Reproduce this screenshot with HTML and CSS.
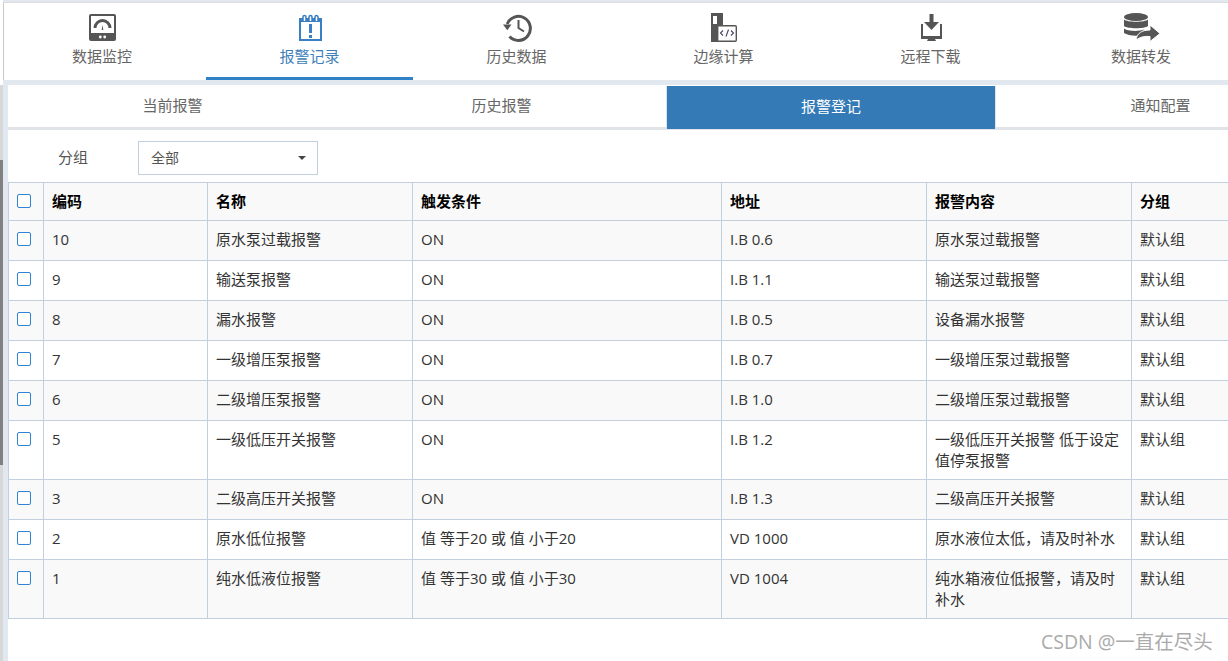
FILE: index.html
```html
<!DOCTYPE html>
<html lang="zh-CN">
<head>
<meta charset="utf-8">
<title>报警登记</title>
<link rel="stylesheet" href="styles.css">
</head>
<body>
<div class="page">
  <div class="rail"><div class="rail-top"></div><div class="rail-light"></div><div class="rail-thumb"></div><div class="rail-end"></div></div>
  <div class="main">
    <nav class="nav">
      <a class="nav-item nav-first">
        <svg class="icon" viewBox="0 0 40 30"><rect x="7" y="1" width="27" height="27" rx="2" fill="#555"/><rect x="9" y="3" width="23" height="17" fill="#fff"/><path d="M13 15a7.500 7.500 0 0 1 15 0" fill="none" stroke="#555" stroke-width="3"/><path d="M20.500 12l.8 5h-1.600z" fill="#555"/><circle cx="18.300" cy="24" r="1.400" fill="#fff"/><circle cx="22.700" cy="24" r="1.400" fill="#fff"/></svg>
        <span>数据监控</span>
      </a>
      <a class="nav-item active">
        <svg class="icon" viewBox="0 0 40 30"><path d="M10 6h21v21H10z" fill="#fff" stroke="#3a7fc1" stroke-width="2"/><rect x="9" y="6" width="23" height="3" fill="#3a7fc1"/><path d="M13 8V4a1.500 1.500 0 0 1 3 0v4M19 8V4a1.500 1.500 0 0 1 3 0v4M25 8V4a1.500 1.500 0 0 1 3 0v4" fill="#fff" stroke="#3a7fc1" stroke-width="1.500"/><rect x="19" y="11" width="3" height="9" fill="#3a7fc1"/><rect x="19" y="22" width="3" height="3" fill="#3a7fc1"/></svg>
        <span>报警记录</span>
      </a>
      <a class="nav-item">
        <svg class="icon" viewBox="0 0 40 30"><path d="M10.200 11A12 12 0 1 1 12.500 23.500" fill="none" stroke="#555" stroke-width="3"/><path d="M6 11.500h8.500l-4.200 5.800z" fill="#555"/><path d="M21.500 7v8l5.500 3.500" fill="none" stroke="#555" stroke-width="2"/></svg>
        <span>历史数据</span>
      </a>
      <a class="nav-item">
        <svg class="icon" viewBox="0 0 40 30"><rect x="7" y="0" width="12" height="29" fill="#555"/><rect x="9" y="3" width="4" height="8" fill="#fff"/><rect x="13.700" y="12.700" width="18.600" height="15.600" rx="1" fill="#fff" stroke="#555" stroke-width="1.400"/><path d="M19 17.500l-2.500 2.500 2.500 2.500M27 17.500l2.500 2.500-2.500 2.500M24.500 16.500l-2.500 7" fill="none" stroke="#446" stroke-width="1.100"/></svg>
        <span>边缘计算</span>
      </a>
      <a class="nav-item">
        <svg class="icon" viewBox="0 0 40 30"><path d="M11 11v13h19V11" fill="none" stroke="#555" stroke-width="2"/><rect x="10" y="23" width="21" height="3" fill="#555"/><path d="M17 26h7l1 2H16z" fill="#555"/><path d="M18.500 1h4v8h5.500l-7.500 8-7.500-8h5.500z" fill="#555"/></svg>
        <span>远程下载</span>
      </a>
      <a class="nav-item nav-last">
        <svg class="icon" viewBox="0 0 40 30"><ellipse cx="15" cy="4" rx="12" ry="4" fill="#555"/><path d="M3 6.500c3 3 21 3 24 0V13c-3 3-21 3-24 0z" fill="#555"/><path d="M3 15.500c3 3 16 3 20 1l-5 6c-6 .5-12-.5-15-2.500z" fill="#555"/><path d="M15 27c1-7 6-10 14-10v-5l10 8.500-10 8v-5c-6-.5-10 .5-14 3.500z" fill="#555" stroke="#fff" stroke-width="1"/></svg>
        <span>数据转发</span>
      </a>
    </nav>
    <div class="panel">
      <div class="tabs">
        <a class="tab">当前报警</a>
        <a class="tab">历史报警</a>
        <a class="tab tab-active">报警登记</a>
        <a class="tab">通知配置</a>
      </div>
      <div class="content">
        <div class="filter">
          <span class="filter-label">分组</span>
          <div class="select"><span class="select-text">全部</span><i class="caret"></i></div>
        </div>
        <table class="grid">
          <colgroup><col class="c-check"><col class="c-code"><col class="c-name"><col class="c-cond"><col class="c-addr"><col class="c-msg"><col class="c-group"></colgroup>
          <thead>
            <tr><th><i class="check"></i></th><th>编码</th><th>名称</th><th>触发条件</th><th>地址</th><th>报警内容</th><th>分组</th></tr>
          </thead>
          <tbody>
            <tr><td><i class="check"></i></td><td>10</td><td>原水泵过载报警</td><td>ON</td><td>I.B 0.6</td><td>原水泵过载报警</td><td>默认组</td></tr>
            <tr><td><i class="check"></i></td><td>9</td><td>输送泵报警</td><td>ON</td><td>I.B 1.1</td><td>输送泵过载报警</td><td>默认组</td></tr>
            <tr><td><i class="check"></i></td><td>8</td><td>漏水报警</td><td>ON</td><td>I.B 0.5</td><td>设备漏水报警</td><td>默认组</td></tr>
            <tr><td><i class="check"></i></td><td>7</td><td>一级增压泵报警</td><td>ON</td><td>I.B 0.7</td><td>一级增压泵过载报警</td><td>默认组</td></tr>
            <tr><td><i class="check"></i></td><td>6</td><td>二级增压泵报警</td><td>ON</td><td>I.B 1.0</td><td>二级增压泵过载报警</td><td>默认组</td></tr>
            <tr><td><i class="check"></i></td><td>5</td><td>一级低压开关报警</td><td>ON</td><td>I.B 1.2</td><td>一级低压开关报警 低于设定值停泵报警</td><td>默认组</td></tr>
            <tr><td><i class="check"></i></td><td>3</td><td>二级高压开关报警</td><td>ON</td><td>I.B 1.3</td><td>二级高压开关报警</td><td>默认组</td></tr>
            <tr><td><i class="check"></i></td><td>2</td><td>原水低位报警</td><td>值 等于20 或 值 小于20</td><td>VD 1000</td><td>原水液位太低，请及时补水</td><td>默认组</td></tr>
            <tr><td><i class="check"></i></td><td>1</td><td>纯水低液位报警</td><td>值 等于30 或 值 小于30</td><td>VD 1004</td><td>纯水箱液位低报警，请及时补水</td><td>默认组</td></tr>
          </tbody>
        </table>
      </div>
    </div>
  </div>
  <div class="watermark">CSDN @一直在尽头</div>
</div>
</body>
</html>
```

FILE: styles.css
```css
* { box-sizing: border-box; }
html, body { margin: 0; padding: 0; height: 100%; overflow: hidden; background: #fff; }
body { font-family: "Open Sans", "Noto Sans CJK SC", sans-serif; font-size: 15px; line-height: 21px; color: #333; }

.page { display: flex; height: 661px; width: 1228px; position: relative; overflow: hidden; }

.rail { width: 3px; flex: none; display: flex; flex-direction: column; background: #d8d8d8; }
.rail-top { height: 85px; background: #fff; }
.rail-light { height: 75px; background: #d8d8d8; }
.rail-thumb { height: 305px; background: #808080; }
.rail-end { flex: 1; background: #d8d8d8; }

.main { flex: 1; min-width: 0; display: flex; flex-direction: column; background: #e2e8f0; }

.nav { height: 78px; margin-top: 2px; flex: none; display: flex; background: #fff; border-top: 1px solid #dcdcdc; border-left: 1px solid #c8c8c8; }
.nav-item { flex: none; width: 207px; height: 77px; padding-top: 10px; display: flex; flex-direction: column; align-items: center; color: #666; }
.nav-first { width: 202px; padding-right: 6px; }
.nav-last { width: 214px; }
.nav-item span { margin-top: 3px; }
.nav-item.active { color: #3f7fb9; border-bottom: 3px solid #2f82c8; }
.icon { width: 40px; height: 30px; display: block; flex: none; }

.panel { flex: 1; min-height: 0; margin: 5px 0 0 5px; display: flex; flex-direction: column; background: #fff; }

.tabs { height: 45px; flex: none; display: flex; border-bottom: 3px solid #e0e3e8; }
.tab { flex: none; width: 329px; padding-bottom: 2px; display: flex; align-items: center; justify-content: center; color: #666; }
.tab-active { width: 330px; background: #337ab7; color: #fff; height: 43px; margin-top: 1px; border-left: 1px solid #dfe3e8; border-right: 1px solid #dfe3e8; }

.content { flex: 1; min-height: 0; overflow: hidden; }

.filter { display: flex; align-items: center; height: 34px; margin: 11px 0 7px; padding-left: 50px; }
.filter-label { width: 80px; color: #555; padding-bottom: 2px; }
.select { width: 180px; height: 34px; border: 1px solid #c2cfdf; padding: 0 11px 0 12px; display: flex; align-items: center; justify-content: space-between; color: #555; }
.select-text { font-size: 14px; padding-bottom: 1px; }
.caret { width: 0; height: 0; border-style: solid; border-width: 4px 4px 0; border-color: #444 transparent transparent; }

.grid { border-collapse: collapse; table-layout: fixed; width: 1328px; }
.c-check { width: 35px; }
.c-code { width: 164px; }
.c-name { width: 205px; }
.c-cond { width: 309px; }
.c-addr { width: 205px; }
.c-msg { width: 205px; }
.c-group { width: 205px; }
.grid th, .grid td { border: 1px solid #c2cfdf; padding: 8px; text-align: left; vertical-align: top; }
.grid th { color: #000; font-weight: 700; background: #f9f9f9; }
.grid td { height: 40px; }
.grid tbody tr:nth-child(odd) td { background: #f9f9f9; }
.check { display: block; width: 14px; height: 14px; margin-top: 3px; background: #fff; border: 1px solid #2f85d0; border-radius: 2px; }

.watermark { position: absolute; left: 1041px; top: 630px; font-size: 19.500px; line-height: 24px; color: #ababab; white-space: nowrap; }
```
